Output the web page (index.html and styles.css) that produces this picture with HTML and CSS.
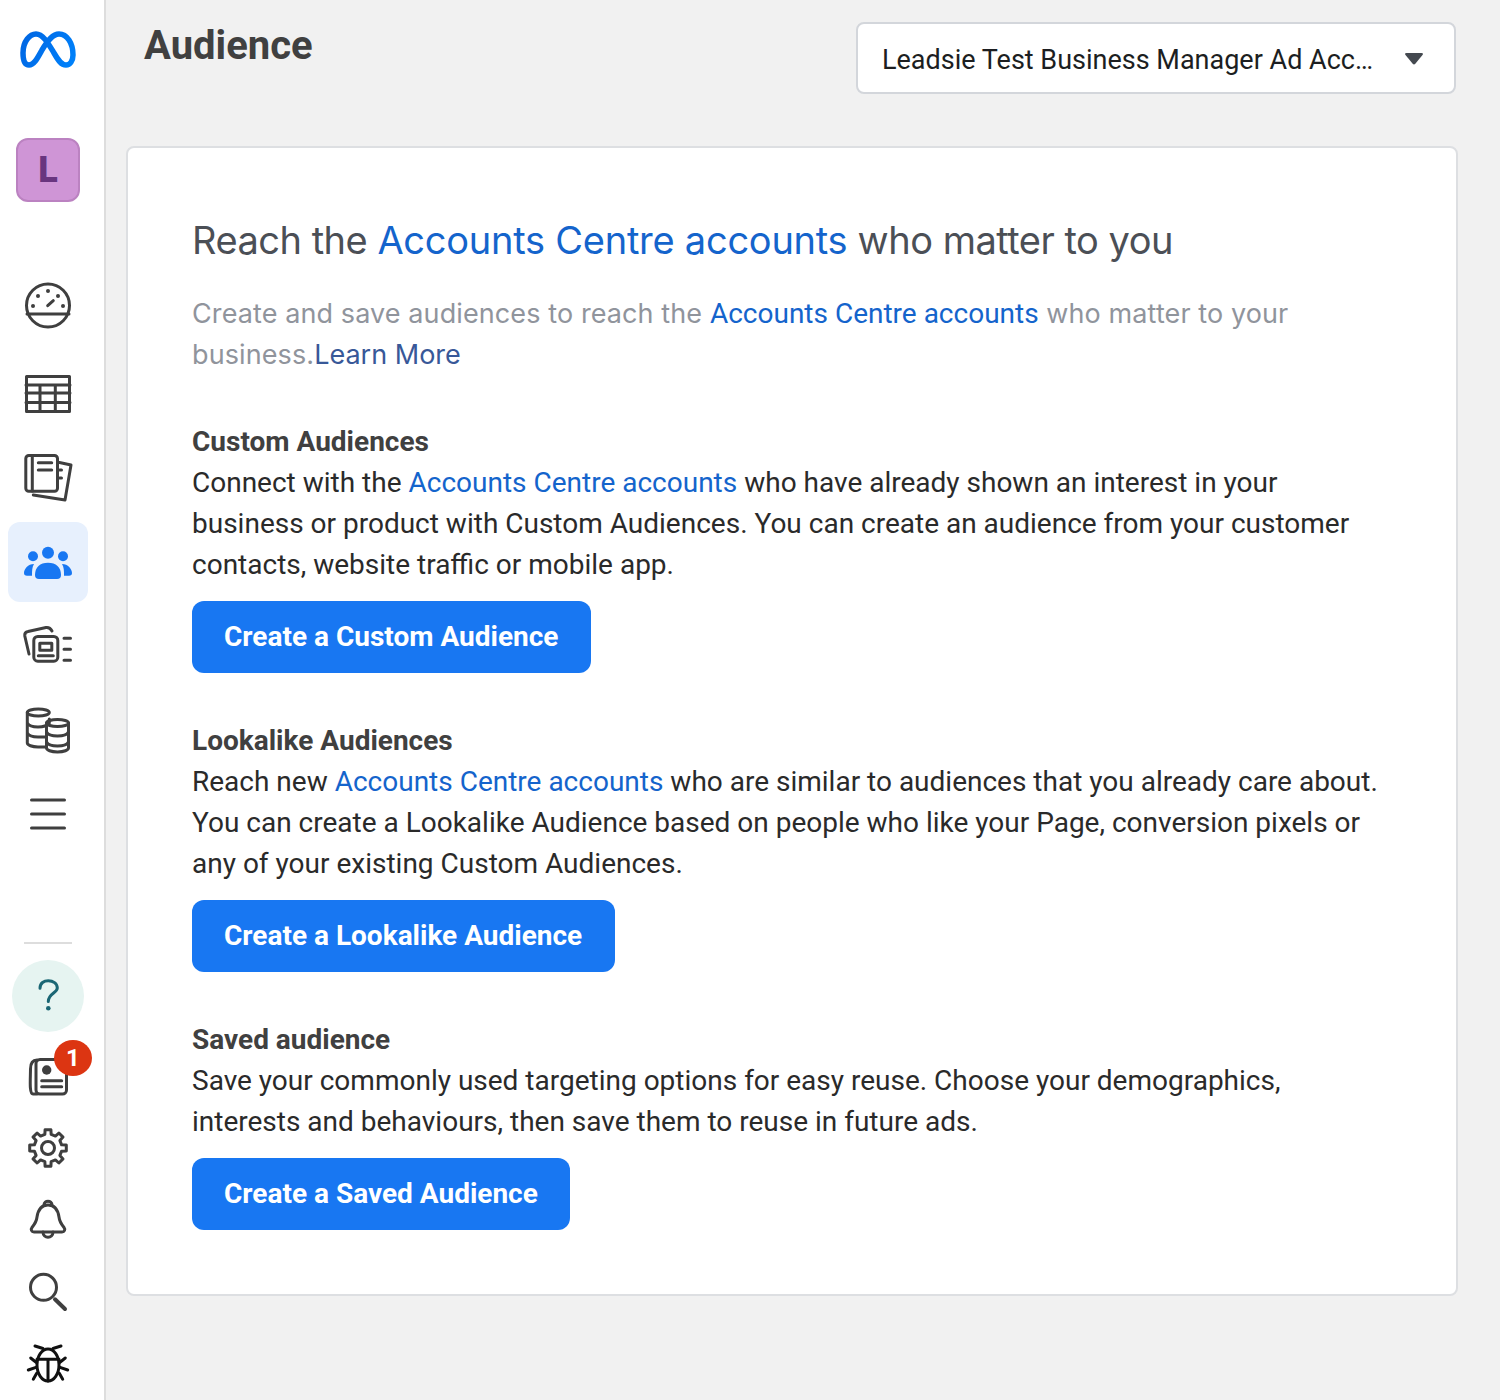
FILE: index.html
```html
<!DOCTYPE html>
<html lang="en">
<head>
    <meta charset="UTF-8">
    <title>Audience</title>
    <link rel="stylesheet" href="styles.css">
</head>
<body>
    <div class="app">
        <nav class="sidebar">
            <svg class="logo" viewBox="0 0 56 37" width="56" height="37">
                <defs>
                    <linearGradient id="metaBlue" gradientUnits="userSpaceOnUse" x1="0" y1="0" x2="56" y2="30">
                        <stop offset="0" stop-color="#0064e1"/>
                        <stop offset="1" stop-color="#0082fb"/>
                    </linearGradient>
                </defs>
                <path fill="none" stroke="url(#metaBlue)" stroke-width="5.5" d="M3 22C3 10 10 3 16 3C23 3 28 12 34 22C38 29 41 34 46 34C50 34 53 30 53 24C53 12 47 3 39 3C33 3 28 9 22 19C17 28 14 34 9 34C5 34 3 29 3 22Z"/>
            </svg>
            <div class="avatar">L</div>

            <div class="nav-item nav-first">
                <svg class="icon" viewBox="0 0 56 56">
                    <circle cx="28" cy="28.5" r="21.5"/>
                    <path d="M7 37H49M27.7 28.7L33.3 23.7"/>
                    <g class="solid">
                        <circle cx="13" cy="29" r="2"/><circle cx="18" cy="19" r="2"/><circle cx="28" cy="14" r="2"/><circle cx="38" cy="19" r="2"/><circle cx="43" cy="29" r="2"/>
                    </g>
                </svg>
            </div>
            <div class="nav-item">
                <svg class="icon" viewBox="0 0 56 56">
                    <rect x="6.5" y="10.5" width="43" height="35"/>
                    <path d="M6 19H50M6 27H50M6 36.500H50M20 19V45M35.300 19V45"/>
                </svg>
            </div>
            <div class="nav-item">
                <svg class="icon" viewBox="0 0 56 56">
                    <rect x="5.800" y="5.500" width="31.700" height="35.700" rx="3"/>
                    <path d="M12.300 6V41M18.300 12.700H31.700M18.300 20H31.700M39.500 12.500L51 15L45 50L13.300 45M39.500 20H41.500M39.500 28H41.500"/>
                </svg>
            </div>
            <div class="nav-item active">
                <svg class="icon" viewBox="0 0 56 56">
                    <g class="solid">
                        <circle cx="28" cy="18.700" r="6"/>
                        <circle cx="13" cy="22.300" r="5"/>
                        <circle cx="43" cy="22.300" r="5"/>
                        <path d="M15 41C15 33 20 28.700 28 28.700C36 28.700 41 33 41 41Q41 45 37 45H19Q15 45 15 41Z"/>
                        <path d="M14 30C8 30 4 35 4 39Q4 41.700 7 41.700H12C12 37 12 33 14 30Z"/>
                        <path d="M42 30C48 30 52 35 52 39Q52 41.700 49 41.700H44C44 37 44 33 42 30Z"/>
                    </g>
                </svg>
            </div>
            <div class="nav-item">
                <svg class="icon" viewBox="0 0 56 56">
                    <rect x="13.800" y="18.500" width="24" height="24.700" rx="4"/>
                    <rect x="19.800" y="25.200" width="12" height="7"/>
                    <path d="M18.300 37.700H33.300M9 36L4.800 18Q4.300 14 8 13.500L26 9.500Q30 9 32 13M44 20.300H50.500M44 31.300H50.500M44 42.300H50.500"/>
                </svg>
            </div>
            <div class="nav-item">
                <svg class="icon" viewBox="0 0 56 56">
                    <ellipse cx="18.300" cy="10.500" rx="11" ry="3.500"/>
                    <path d="M7.300 10.500V41C7.300 43 12 45 18 45H26M7.300 21C9 24 14 25 18 25C22 25 27 24 29.300 21V17M7.300 31C9 34 14 35 18 35H26"/>
                    <ellipse cx="37.500" cy="21" rx="11" ry="3.500"/>
                    <path d="M26.500 21V46C26.500 48 31 50 37.500 50C44 50 48.500 48 48.500 46V21M26.500 30C28 33 33 34 37.500 34C42 34 47 33 48.500 30M26.500 40C28 43 33 44 37.500 44C42 44 47 43 48.500 40"/>
                </svg>
            </div>
            <div class="nav-item">
                <svg class="icon" viewBox="0 0 56 56">
                    <path d="M11.500 14H44.500M11.500 28H44.500M11.500 42H44.500"/>
                </svg>
            </div>

            <div class="divider"></div>

            <div class="help">
                <svg class="icon" viewBox="0 0 56 56">
                    <path d="M20 20.300C20 15 24 12.700 28.300 12.700C33 12.700 37.300 15.500 37.300 20C37.300 25 28.300 25.500 28.300 33.500"/>
                    <circle class="solid" cx="28.300" cy="40.300" r="2.300"/>
                </svg>
            </div>
            <div class="tool-item tool-news">
                <svg class="icon" viewBox="0 0 56 56">
                    <path d="M17 46H13C9 46 10.500 30 10.500 21C10.500 15 13 12 17 12"/>
                    <rect x="16" y="11.500" width="30.500" height="34.500" rx="4"/>
                    <path d="M21.700 32.700H41.700M21.700 38.700H41.700"/>
                    <circle class="solid" cx="26.700" cy="22" r="4.700"/>
                </svg>
                <span class="badge">1</span>
            </div>
            <div class="tool-item">
                <svg class="icon" viewBox="-28 -28 56 56">
                    <polygon points="18.300,2.900 13.600,3.150 11.900,7.400 15,10.900 10.900,15 7.400,11.900 3.150,13.600 2.900,18.300 -2.900,18.300 -3.150,13.600 -7.400,11.900 -10.900,15 -15,10.900 -11.900,7.400 -13.600,3.150 -18.300,2.900 -18.300,-2.900 -13.600,-3.150 -11.900,-7.400 -15,-10.900 -10.900,-15 -7.400,-11.900 -3.150,-13.600 -2.900,-18.300 2.900,-18.300 3.150,-13.600 7.400,-11.900 10.900,-15 15,-10.900 11.900,-7.400 13.600,-3.150 18.300,-2.900"/>
                    <circle cx="0" cy="0" r="6.500"/>
                </svg>
            </div>
            <div class="tool-item">
                <svg class="icon" viewBox="0 0 56 56">
                    <path d="M28 13C20.500 13 18 18.500 17 25C16.500 30 14 33 12 35.500C10.500 37.500 11.500 40 14 40H42C44.500 40 45.500 37.500 44 35.500C42 33 39.500 30 39 25C38 18.500 35.500 13 28 13Z"/>
                    <path d="M24 13C24 8 32 8 32 13M23 40C23 47 33 47 33 40"/>
                </svg>
            </div>
            <div class="tool-item">
                <svg class="icon icon-search" viewBox="0 0 56 56">
                    <circle cx="23.500" cy="23.300" r="13"/>
                    <path class="handle" d="M35 35.300L45 45"/>
                </svg>
            </div>
            <div class="tool-item tool-bug">
                <svg class="icon" viewBox="0 0 56 56">
                    <ellipse cx="28" cy="29" rx="11" ry="16"/>
                    <path d="M17 23.300H39M28 23.300V45M15 10L23 12.500M41 10L33 12.500M10.700 22L16.700 26.700M8.300 34L16 31.300M13.300 43.300L16.700 37.300M45.300 22L39.300 26.700M47.700 34L40 31.300M42.700 43.300L39.300 37.300"/>
                </svg>
            </div>
        </nav>

        <main class="content">
            <header class="page-head">
                <h1 class="page-title">Audience</h1>
                <div class="account-select">
                    <span class="account-name">Leadsie Test Business Manager Ad Acc…</span>
                    <svg class="caret" viewBox="0 0 20 14" width="20" height="14">
                        <path d="M2.500 1H17.500Q19.800 1 18.500 3L11.300 11.800Q10 13.200 8.700 11.800L1.500 3Q.2 1 2.500 1Z"/>
                    </svg>
                </div>
            </header>

            <section class="card">
                <h2 class="card-title">Reach the <a class="link">Accounts Centre accounts</a> who matter to you</h2>
                <p class="card-intro">Create and save audiences to reach the <a class="link">Accounts Centre accounts</a> who matter to your business.<a class="learn">Learn More</a></p>

                <div class="block">
                    <h3 class="block-title">Custom Audiences</h3>
                    <p class="block-text">Connect with the <a class="link">Accounts Centre accounts</a> who have already shown an interest in your business or product with Custom Audiences. You can create an audience from your customer contacts, website traffic or mobile app.</p>
                    <button class="btn">Create a Custom Audience</button>
                </div>

                <div class="block">
                    <h3 class="block-title">Lookalike Audiences</h3>
                    <p class="block-text">Reach new <a class="link">Accounts Centre accounts</a> who are similar to audiences that you already care about. You can create a Lookalike Audience based on people who like your Page, conversion pixels or any of your existing Custom Audiences.</p>
                    <button class="btn">Create a Lookalike Audience</button>
                </div>

                <div class="block">
                    <h3 class="block-title">Saved audience</h3>
                    <p class="block-text">Save your commonly used targeting options for easy reuse. Choose your demographics, interests and behaviours, then save them to reuse in future ads.</p>
                    <button class="btn">Create a Saved Audience</button>
                </div>
            </section>
        </main>
    </div>
</body>
</html>
```

FILE: styles.css
```css
body {
    margin: 0;
    background: #f1f1f1;
    font-family: Roboto, "Liberation Sans", sans-serif;
    color: #3a3a3a;
}

.app {
    display: flex;
    height: 1400px;
    overflow: hidden;
}

/* left rail */
.sidebar {
    flex: 0 0 96px;
    padding-right: 8px;
    display: flex;
    flex-direction: column;
    align-items: center;
    background: #fff;
    border-right: 2px solid #dddddd;
}

.logo {
    margin-top: 31px;
}

.avatar {
    box-sizing: border-box;
    width: 64px;
    height: 64px;
    margin-top: 70px;
    display: flex;
    align-items: center;
    justify-content: center;
    background: #cf95d6;
    border: 2px solid #bb82c1;
    border-radius: 12px;
    color: #69357f;
    font-size: 36px;
    font-weight: 900;
}

.nav-item {
    width: 80px;
    height: 80px;
    margin-bottom: 4px;
    display: flex;
    align-items: center;
    justify-content: center;
    border-radius: 12px;
}

.nav-first {
    margin-top: 63px;
    margin-bottom: 9px;
}

.nav-item.active {
    background: #e7f0fd;
}

.icon {
    width: 56px;
    height: 56px;
    fill: none;
    stroke: #3f3f3f;
    stroke-width: 3;
    stroke-linecap: round;
    stroke-linejoin: round;
}

.icon .solid {
    fill: #3f3f3f;
    stroke: none;
}

.icon-search .handle {
    stroke-width: 4;
}

.active .icon .solid {
    fill: #1877f2;
}

.divider {
    width: 48px;
    height: 2px;
    margin-top: 84px;
    background: #dddddd;
    flex: none;
}

.help {
    width: 72px;
    height: 72px;
    margin-top: 16px;
    flex: none;
    display: flex;
    align-items: center;
    justify-content: center;
    border-radius: 50%;
    background: #e6f4f1;
}

.help .icon {
    stroke: #1a6674;
}

.help .icon .solid {
    fill: #1a6674;
    stroke: none;
}

.tool-item {
    position: relative;
    width: 72px;
    height: 72px;
    flex: none;
    display: flex;
    align-items: center;
    justify-content: center;
}

.tool-news {
    margin-top: 8px;
}

.tool-bug .icon {
    stroke: #111;
}

.badge {
    position: absolute;
    top: 0;
    left: 42px;
    width: 38px;
    height: 36px;
    display: flex;
    align-items: center;
    justify-content: center;
    border-radius: 50%;
    background: #dc3512;
    color: #fff;
    font-size: 24px;
    font-weight: 700;
}

/* main column */
.content {
    flex: 1;
    padding: 22px 42px 0 20px;
}

.page-head {
    display: flex;
    justify-content: space-between;
    align-items: flex-start;
    padding: 0 2px 0 18px;
}

.page-title {
    margin: 0;
    font-size: 40px;
    line-height: 48px;
    font-weight: 700;
    color: #404040;
}

.account-select {
    box-sizing: border-box;
    width: 600px;
    height: 72px;
    display: flex;
    align-items: center;
    justify-content: space-between;
    padding: 2px 30px 0 24px;
    background: #fff;
    border: 2px solid #d3d6db;
    border-radius: 8px;
}

.account-name {
    padding-top: 2px;
    font-size: 27px;
    color: #1c1e21;
}

.caret {
    fill: #444950;
}

.card {
    box-sizing: border-box;
    height: 1150px;
    margin-top: 52px;
    padding: 67px 64px 0;
    background: #fff;
    border: 2px solid #dddfe2;
    border-radius: 8px;
}

.card-title {
    margin: 0;
    font-family: Inter, Roboto, sans-serif;
    font-size: 38px;
    line-height: 50px;
    font-weight: 400;
    letter-spacing: -0.5px;
    color: #4b4f56;
}

.card-title .link {
    letter-spacing: -0.25px;
}

.card-intro {
    margin: 28px 0 0;
    font-family: Inter, Roboto, sans-serif;
    font-size: 27px;
    line-height: 41px;
    letter-spacing: 0.1px;
    color: #90949c;
}

.card-intro .link {
    font-family: Roboto, sans-serif;
    font-size: 28px;
    letter-spacing: 0;
}

.link {
    color: #1464cc;
}

.learn {
    letter-spacing: 0;
    color: #385898;
}

.block {
    margin-top: 47px;
}

.card-intro + .block {
    margin-top: 46px;
}

.block-title {
    margin: 0;
    font-size: 28px;
    line-height: 41px;
    font-weight: 700;
    color: #404040;
}

.block-text {
    margin: 0;
    font-size: 28px;
    line-height: 41px;
    color: #2a2a2a;
}

.btn {
    display: block;
    height: 72px;
    margin-top: 16px;
    padding: 0 32.5px 2px 32px;
    border: 0;
    border-radius: 12px;
    background: #1877f2;
    color: #fff;
    font-family: inherit;
    font-size: 28px;
    font-weight: 700;
}
```
